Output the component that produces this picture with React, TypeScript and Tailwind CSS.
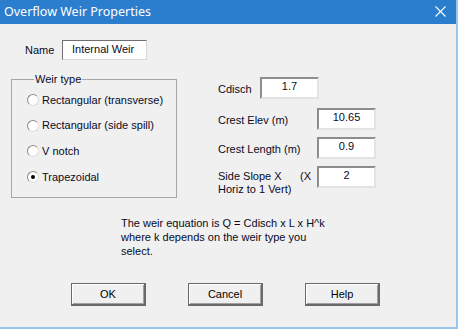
const font = { fontFamily: '"Liberation Sans", Arial, sans-serif' };

function Radio({ label, checked }: { label: string; checked?: boolean }) {
  return (
    <div className="flex items-center h-[14px]">
      <div className="w-[12px] h-[12px] rounded-full bg-white border border-t-[#8a8a8a] border-l-[#8a8a8a] border-b-[#dcdcdc] border-r-[#dcdcdc] flex items-center justify-center">
        {checked && <div className="w-[4px] h-[4px] rounded-full bg-black" />}
      </div>
      <span className="ml-[3px]">{label}</span>
    </div>
  );
}

function Field({ value, width = "w-[59px]" }: { value: string; width?: string }) {
  return (
    <div
      className={`${width} h-[22px] bg-white border-2 border-t-[#8d8d8d] border-l-[#8d8d8d] border-b-[#e3e3e3] border-r-[#e3e3e3] flex items-center justify-center leading-none pb-[3px]`}
    >
      {value}
    </div>
  );
}

function Btn({ label }: { label: string }) {
  return (
    <button className="w-[75px] h-[23px] bg-[#f0f0f0] border border-[#6a6a6a] border-b-2 border-r-2 shadow-[inset_1px_1px_0_#ffffff,inset_-1px_-1px_0_#a0a0a0] text-[11px] text-black">
      {label}
    </button>
  );
}

export default function App() {
  return (
    <div
      className="w-[458px] h-[329px] bg-[#f0f0f0] border-r-2 border-b-2 border-[#96c6ee] flex flex-col text-[11px] text-[#0a0a1e] overflow-hidden"
      style={font}
    >
      {/* Title bar */}
      <div className="h-[24px] shrink-0 bg-[#2b7dcd] flex items-center justify-between pl-[4px] pr-[10px]">
        <span className="text-white text-[12.5px]" style={{ fontFamily: '"Noto Sans", sans-serif' }}>
          Overflow Weir Properties
        </span>
        <svg width="11" height="11" viewBox="0 0 11 11" className="mb-[1px]">
          <path d="M0.5 0.5 L10.5 10.5 M10.5 0.5 L0.5 10.5" stroke="white" strokeWidth="1.1" />
        </svg>
      </div>

      {/* Name */}
      <div className="flex items-center mt-[16px] pl-[25px]">
        <span className="w-[37px]">Name</span>
        <div className="w-[85px] h-[20px] bg-white border border-t-[#707070] border-l-[#707070] border-b-[#d8d8d8] border-r-[#d8d8d8] flex items-center pl-[9px] pb-[1px]">
          Internal Weir
        </div>
      </div>

      <div className="flex mt-[12px]">
        {/* Weir type group */}
        <fieldset className="ml-[11px] w-[166px] h-[126px] border border-[#a6a6a6] pl-[15px]">
          <legend className="ml-[7px] px-[1px] leading-[14px]">Weir type</legend>
          <div className="flex flex-col gap-[11.7px] mt-[7px]">
            <Radio label="Rectangular (transverse)" />
            <Radio label="Rectangular (side spill)" />
            <Radio label="V notch" />
            <Radio label="Trapezoidal" checked />
          </div>
        </fieldset>

        {/* Coefficients */}
        <div className="ml-[41px] mt-[5px] flex flex-col">
          <div className="flex items-center">
            <span className="w-[42px] pt-[2px]">Cdisch</span>
            <Field value="1.7" />
          </div>
          <div className="flex items-center mt-[9px]">
            <span className="w-[99px] pt-[2px]">Crest Elev (m)</span>
            <Field value="10.65" />
          </div>
          <div className="flex items-center mt-[7px]">
            <span className="w-[99px] pt-[2px]">Crest Length (m)</span>
            <Field value="0.9" />
          </div>
          <div className="flex items-start mt-[7px]">
            <span className="w-[82px] leading-[13px] pt-[4px]">
              Side Slope X
              <br />
              Horiz to 1 Vert)
            </span>
            <span className="w-[17px] pt-[4px] leading-[13px]">(X</span>
            <Field value="2" />
          </div>
        </div>
      </div>

      {/* Equation note */}
      <div className="ml-[121px] mt-[18px] leading-[14px] w-[210px]">
        The weir equation is Q = Cdisch x L x H^k
        <br />
        where k depends on the weir type you
        <br />
        select.
      </div>

      {/* Buttons */}
      <div className="flex gap-[42px] ml-[71px] mt-[25px]">
        <Btn label="OK" />
        <Btn label="Cancel" />
        <Btn label="Help" />
      </div>
    </div>
  );
}
